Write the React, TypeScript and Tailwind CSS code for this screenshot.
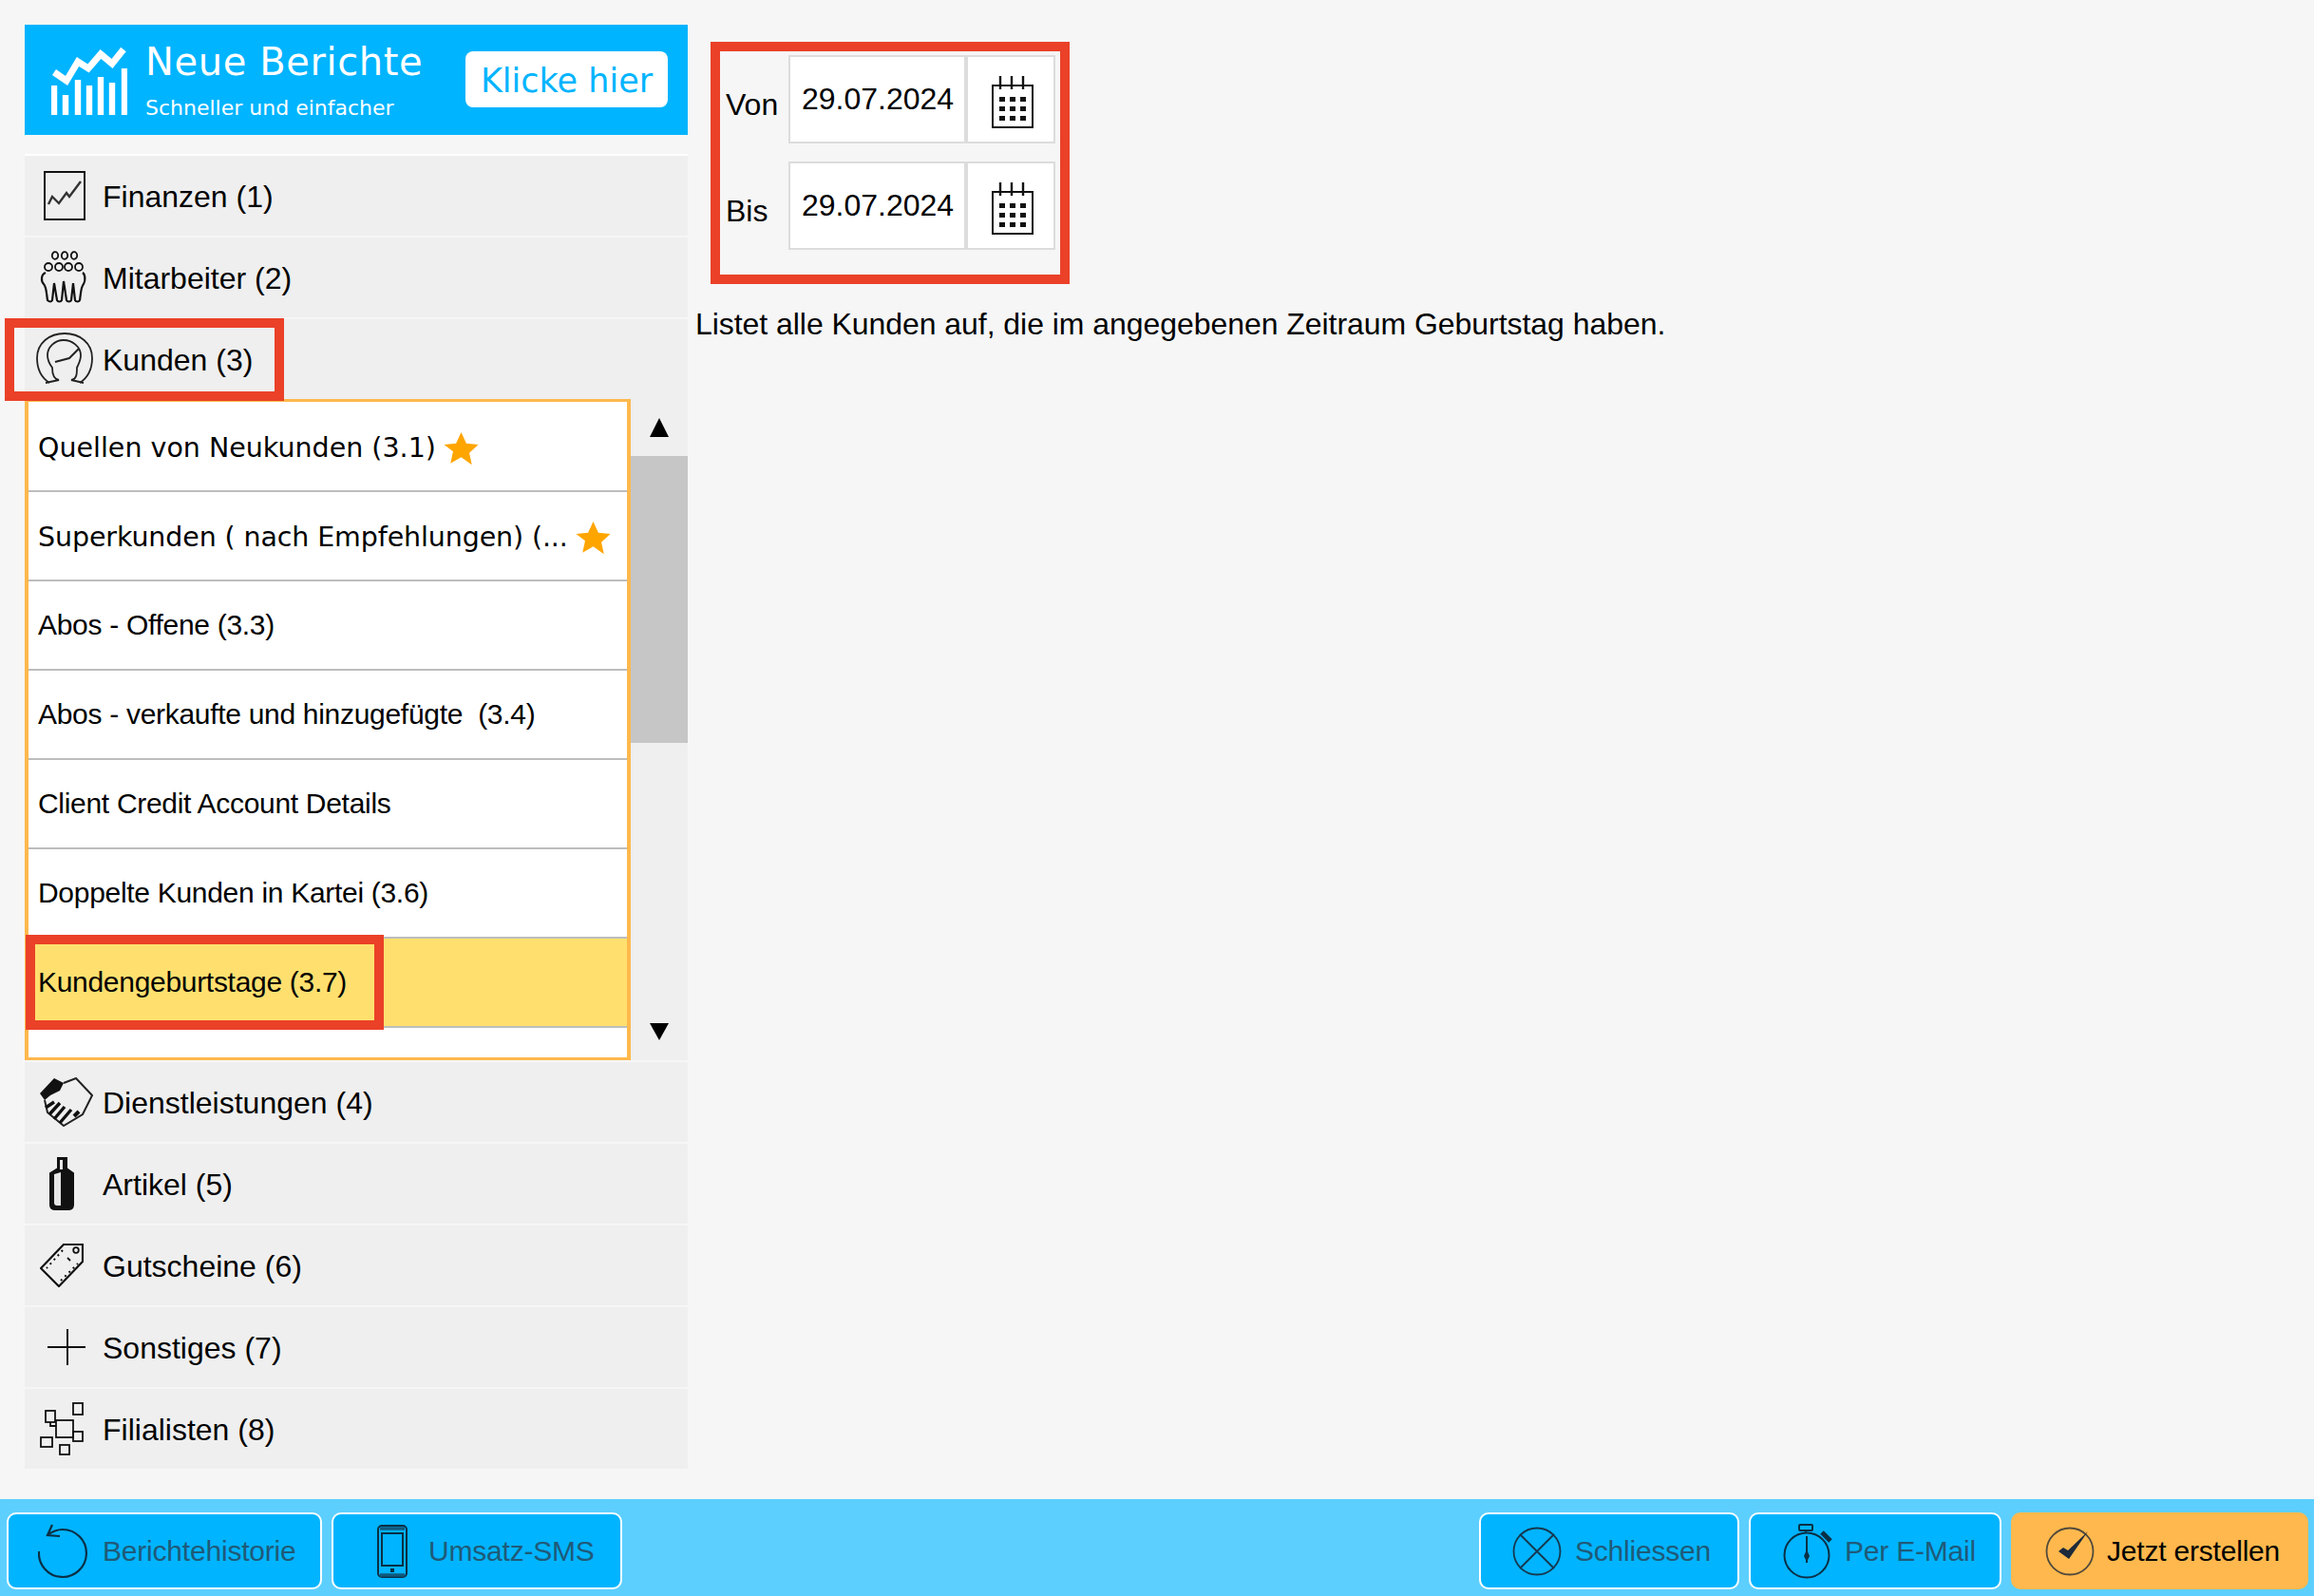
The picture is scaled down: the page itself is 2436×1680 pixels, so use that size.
import type { ReactNode } from 'react';

const ARIAL = "font-['Liberation_Sans',Arial,sans-serif]";
const LUCIDA = "font-['DejaVu_Sans',sans-serif]";
const RED = 'border-[10px] border-[#ea4128]';

function IconFinanzen() {
  return (
    <svg width="44" height="52" viewBox="0 0 44 52" fill="none" stroke="#111">
      <rect x="1" y="1" width="42" height="50" strokeWidth="2" />
      <path d="M5 35l4-8 7 7 8-11 3 4 12-16" strokeWidth="2.4" stroke="#333" />
    </svg>
  );
}

function IconMitarbeiter() {
  return (
    <svg width="50" height="56" viewBox="0 0 50 56" fill="none" stroke="#111" strokeWidth="1.8">
      <ellipse cx="16" cy="5" rx="3.2" ry="3.8" />
      <ellipse cx="26" cy="5" rx="3.2" ry="3.8" />
      <ellipse cx="36" cy="5" rx="3.2" ry="3.8" />
      <circle cx="9" cy="17" r="4" />
      <circle cx="20" cy="17" r="4" />
      <circle cx="30" cy="17" r="4" />
      <circle cx="41" cy="17" r="4" />
      <path
        d="M6 23C1 25 1 32 4 35 7 38 7 46 8 52 10 54 12 54 13 52L15 34 18 52C19 54 22 54 23 52L25 32 28 52C29 54 32 54 33 52L35 34 37 52C38 54 41 54 42 52 43 46 43 38 46 35 48 32 48 25 45 23"
        strokeWidth="2.2"
      />
    </svg>
  );
}

function IconKunden() {
  return (
    <svg width="60" height="56" viewBox="0 0 60 56" fill="none" stroke="#222" strokeWidth="1.8">
      <path d="M14 53C5 47 1 37 1 27 1 11 14 1 30 1s29 10 29 26c0 10-4 20-13 26" />
      <path d="M10 53l14-3c-6-1-7-7-7-13-3-4-5-8-5-13C12 15 20 8 29 8s18 7 18 16c0 5-2 9-4 13 0 6 0 12-6 13l13 3" />
      <path d="M20 31l15-4 10-10" strokeWidth="2" />
    </svg>
  );
}

function IconDienst() {
  return (
    <svg width="56" height="52" viewBox="0 0 56 52" fill="none" stroke="#222" strokeWidth="2">
      <path d="M25 6L38 1l17 18-10 20-20 12L8 37 5 24" />
      <path d="M0 17L15 1l10 5-4 8-10 5-6 5z" fill="#111" stroke="none" />
      <path d="M6 32l9-6M10 39l11-12M15 44l11-13M21 48l12-14" strokeWidth="3.4" stroke="#111" />
      <path d="M36 41l5-5" strokeWidth="4" stroke="#111" />
    </svg>
  );
}

function IconArtikel() {
  return (
    <svg width="26" height="56" viewBox="0 0 26 56" fill="none" stroke="#111" strokeWidth="2">
      <path d="M9 1h9v11l7 5v33c0 3-2 5-5 5H6c-3 0-5-2-5-5V17l8-5z" fill="#111" />
      <path d="M5 18v30c0 2 1 3 3 3h4V16zM11 3v10h3V3z" fill="#e6e6e6" stroke="none" />
    </svg>
  );
}

function IconGutschein() {
  return (
    <svg width="46" height="46" viewBox="0 0 46 46" fill="none" stroke="#111">
      <path d="M25 1h20v18L20 45 1 26z" strokeWidth="2.2" />
      <path d="M24 7L7 26M22 39l18-18" strokeWidth="2" strokeDasharray="2 4" />
      <circle cx="38" cy="7" r="2.8" strokeWidth="1.8" />
      <path d="M29 15l3 3" strokeWidth="1.8" />
    </svg>
  );
}

function IconPlus() {
  return (
    <svg width="40" height="38" viewBox="0 0 40 38" fill="none" stroke="#111" strokeWidth="2">
      <path d="M0 19h40M21 0v38" />
    </svg>
  );
}

function IconFilialen() {
  return (
    <svg width="46" height="56" viewBox="0 0 46 56" fill="none" stroke="#111" strokeWidth="1.8">
      <rect x="35" y="1" width="10" height="12" />
      <rect x="6" y="9" width="10" height="12" />
      <rect x="17" y="19" width="18" height="18" />
      <rect x="35" y="31" width="10" height="10" />
      <rect x="1" y="37" width="12" height="10" />
      <rect x="21" y="45" width="10" height="10" />
      <path d="M11 21v4h6" />
    </svg>
  );
}

function IconCalendar() {
  return (
    <svg width="44" height="56" viewBox="0 0 44 56" fill="none" stroke="#111">
      <rect x="1" y="11" width="42" height="44" strokeWidth="2" fill="#fff" />
      <path d="M9 1v14M21 1v14M33 1v14" strokeWidth="2.4" />
      <path d="M8 23h6v5H8zM19 23h6v5h-6zM30 23h6v5h-6zM8 33h6v5H8zM19 33h6v5h-6zM30 33h6v5h-6zM8 43h6v5H8zM19 43h6v5h-6zM30 43h6v5h-6z" fill="#111" stroke="none" />
    </svg>
  );
}

function IconTrend() {
  return (
    <svg width="80" height="74" viewBox="0 0 80 74" fill="none" stroke="#fff">
      <path d="M3 28l13 9 12-20 11 7 13-15 12 10 12-15" strokeWidth="7" />
      <path d="M3 73V42M15 73V52M28 73V36M40 73V42M52 73V33M64 73V39M77 73V24" strokeWidth="6.4" />
    </svg>
  );
}

function IconUndo() {
  return (
    <svg width="52" height="60" viewBox="0 0 52 60" fill="none" stroke="#0b2f45" strokeWidth="2.2">
      <path d="M1 30A25 25 0 1 0 26 7C20 7 15 9 10 13" />
      <path d="M15 2l-5 11 13 1" />
    </svg>
  );
}

function IconPhone() {
  return (
    <svg width="32" height="56" viewBox="0 0 32 56" fill="none" stroke="#0b2f45" strokeWidth="2">
      <rect x="1" y="1" width="30" height="54" rx="4" />
      <rect x="5" y="9" width="22" height="34" />
      <path d="M3 4h26M3 53h26" strokeWidth="3.5" stroke="#11597d" />
      <rect x="14" y="46" width="4" height="4" fill="#0b2f45" stroke="none" />
    </svg>
  );
}

function IconCross() {
  return (
    <svg width="52" height="52" viewBox="0 0 52 52" fill="none" stroke="#16384f" strokeWidth="1.8">
      <circle cx="26" cy="26" r="24.5" />
      <path d="M8 8l36 36M44 8L8 44" />
    </svg>
  );
}

function IconWatch() {
  return (
    <svg width="54" height="58" viewBox="0 0 54 58" fill="none" stroke="#0b2f45" strokeWidth="2">
      <circle cx="25" cy="33" r="23.5" />
      <rect x="17" y="1" width="14" height="6" rx="1" />
      <path d="M24 7v3" />
      <path d="M41 9l9 9" strokeWidth="5" />
      <path d="M25 13v28" />
      <path d="M25 27l3 7-3 6-3-6z" fill="#0b2f45" stroke="none" />
    </svg>
  );
}

function IconCheck() {
  return (
    <svg width="52" height="52" viewBox="0 0 52 52" fill="none" stroke="#524a3c" strokeWidth="1.8">
      <circle cx="26" cy="26" r="24.5" />
      <path d="M14 26l5-4 5 3L45 5 25 34z" fill="#1d2a3a" stroke="none" />
    </svg>
  );
}

function Star() {
  return (
    <svg width="37" height="36" viewBox="0 0 24 24" className="shrink-0" fill="#ffa500">
      <path d="M12 .6l3.6 7.9 8.4.9-6.3 5.7 1.8 8.4L12 18.2l-7.5 4.3 1.8-8.4L0 9.4l8.4-.9z" />
    </svg>
  );
}

function AccordionRow({ icon, label, iconBox }: { icon: ReactNode; label: string; iconBox: string }) {
  return (
    <div className="flex h-[84px] items-center bg-[#efefef]">
      <div className={`flex w-[82px] shrink-0 items-center ${iconBox}`}>{icon}</div>
      <span className={`${ARIAL} mt-[2px] text-[32px] leading-none text-black`}>{label}</span>
    </div>
  );
}

function SubItem({ label, lucida, star, active, tight }: { label: string; lucida?: boolean; star?: string; active?: boolean; tight?: boolean }) {
  return (
    <div
      className={`flex h-[94px] items-center border-b-2 border-[#bdbdbd] pl-[10px] ${lucida ? 'pt-[4px]' : ''} ${active ? 'bg-[#ffe06f]' : 'bg-white'}`}
    >
      <span
        className={
          lucida
            ? `${LUCIDA} text-[28.5px] leading-none text-black whitespace-pre ${tight ? 'tracking-[-0.12px]' : ''}`
            : `${ARIAL} text-[30px] leading-none tracking-[-0.3px] text-black whitespace-pre`
        }
      >
        {label}
      </span>
      {star && <span className={`flex ${star}`}><Star /></span>}
    </div>
  );
}

function DateField({ label, value }: { label: string; value: string }) {
  return (
    <div className="flex items-start">
      <span className="w-[66px] pt-[36px] text-[32px] leading-none">{label}</span>
      <div className="h-[93px] w-[187px] border-2 border-[#dcdcdc] bg-white pl-[12px] pt-[28px] text-[32px] leading-none">
        {value}
      </div>
      <div className="flex h-[93px] w-[94px] items-center justify-center border-2 border-[#dcdcdc] bg-white pl-[4px] pt-[4px]">
        <IconCalendar />
      </div>
    </div>
  );
}

function FooterButton({ icon, label, className, gap }: { icon: ReactNode; label: string; className: string; gap: string }) {
  return (
    <button className={`flex h-[81px] items-center rounded-[10px] text-[30px] leading-none tracking-[-0.2px] ${className}`}>
      {icon}
      <span className={gap}>{label}</span>
    </button>
  );
}

const SUB_ITEMS = [
  'Abos - Offene (3.3)',
  'Abos - verkaufte und hinzugefügte  (3.4)',
  'Client Credit Account Details',
  'Doppelte Kunden in Kartei (3.6)',
];

export default function App() {
  return (
    <div className={`${ARIAL} flex h-[1680px] w-[2436px] flex-col bg-[#f6f6f6] text-black`}>
      <div className="flex h-[1578px] shrink-0">
        {/* Left column */}
        <div className="ml-[26px] w-[698px] pt-[26px]">
          <div className="flex h-[116px] items-start bg-[#00b4ff] pl-[28px] pt-[22px] text-white">
            <IconTrend />
            <div className={`ml-[19px] w-[337px] ${LUCIDA}`}>
              <div className="-mt-[3px] text-[40px] leading-[40px] tracking-[0.6px]">Neue Berichte</div>
              <div className="mt-[17px] text-[22px] leading-[24px]">Schneller und einfacher</div>
            </div>
            <div className={`mt-[6px] flex h-[59px] w-[213px] items-center justify-center rounded-[8px] bg-white pt-[3px] ${LUCIDA} text-[35px] leading-none text-[#00b4ff]`}>
              Klicke hier
            </div>
          </div>

          <div className="mt-[20px] flex flex-col gap-[2px]">
            <div className="-mb-[2px] h-[2px] bg-white" />
            <AccordionRow icon={<IconFinanzen />} label="Finanzen (1)" iconBox="pl-[20px]" />
            <AccordionRow icon={<IconMitarbeiter />} label="Mitarbeiter (2)" iconBox="pl-[16px]" />
            <div className="relative">
              <AccordionRow icon={<IconKunden />} label="Kunden (3)" iconBox="pl-[12px]" />
              <div className={`absolute -left-[21px] -top-[1px] h-[87px] w-[294px] ${RED}`} />
            </div>
          </div>

          <div className="flex h-[696px]">
            <div className="h-full w-[638px] border-x-[4px] border-y-[3px] border-[#ffb84d] bg-white pt-[1px]">
              <SubItem label="Quellen von Neukunden (3.1)" lucida star="ml-[8px]" />
              <SubItem label="Superkunden ( nach Empfehlungen) (..." lucida tight star="ml-[8px]" />
              {SUB_ITEMS.map(item => (
                <SubItem key={item} label={item} />
              ))}
              <div className="relative">
                <SubItem label="Kundengeburtstage (3.7)" active />
                <div className={`absolute -left-[3px] -top-[4px] h-[100px] w-[377px] ${RED}`} />
              </div>
            </div>
            <div className="relative h-full w-[60px] bg-[#efefef]">
              <div className="mx-auto mt-[20px] h-0 w-0 border-x-[10px] border-b-[20px] border-x-transparent border-b-black" />
              <div className="mt-[20px] h-[302px] bg-[#c6c6c6]" />
              <div className="absolute left-[20px] top-[657px] h-0 w-0 border-x-[10px] border-t-[18px] border-x-transparent border-t-black" />
            </div>
          </div>

          <div className="mt-[2px] flex flex-col gap-[2px]">
            <AccordionRow icon={<IconDienst />} label="Dienstleistungen (4)" iconBox="pl-[16px]" />
            <AccordionRow icon={<IconArtikel />} label="Artikel (5)" iconBox="pl-[26px]" />
            <AccordionRow icon={<IconGutschein />} label="Gutscheine (6)" iconBox="pl-[16px]" />
            <AccordionRow icon={<IconPlus />} label="Sonstiges (7)" iconBox="pl-[24px]" />
            <AccordionRow icon={<IconFilialen />} label="Filialisten (8)" iconBox="pl-[16px]" />
          </div>
        </div>

        {/* Right column */}
        <div className="ml-[8px] pt-[44px]">
          <div className={`ml-[16px] flex h-[255px] w-[378px] flex-col gap-[19px] ${RED} pl-[6px] pt-[4px]`}>
            <DateField label="Von" value="29.07.2024" />
            <DateField label="Bis" value="29.07.2024" />
          </div>
          <p className="mt-[26px] text-[32px] leading-none tracking-[-0.05px]">
            Listet alle Kunden auf, die im angegebenen Zeitraum Geburtstag haben.
          </p>
        </div>
      </div>

      {/* Footer */}
      <div className="flex h-[102px] items-start justify-between bg-[#5ccfff] pl-[7px] pr-[6px] pt-[14px]">
        <div className="flex gap-[10px]">
          <FooterButton icon={<IconUndo />} label="Berichtehistorie" gap="ml-[16px]" className="w-[332px] border-2 border-white bg-[#00b4ff] pl-[31px] text-[#1f5a78]" />
          <FooterButton icon={<IconPhone />} label="Umsatz-SMS" gap="ml-[22px]" className="w-[306px] border-2 border-white bg-[#00b4ff] pl-[46px] text-[#1f5a78]" />
        </div>
        <div className="flex gap-[10px]">
          <FooterButton icon={<IconCross />} label="Schliessen" gap="ml-[14px]" className="w-[274px] border-2 border-white bg-[#00b4ff] pl-[33px] text-[#1f5a78]" />
          <FooterButton icon={<IconWatch />} label="Per E-Mail" gap="ml-[11px]" className="w-[266px] border-2 border-white bg-[#00b4ff] pl-[34px] text-[#1f5a78]" />
          <FooterButton icon={<IconCheck />} label="Jetzt erstellen" gap="ml-[13px]" className="w-[313px] bg-[#ffb84d] pl-[36px] text-black" />
        </div>
      </div>
    </div>
  );
}
